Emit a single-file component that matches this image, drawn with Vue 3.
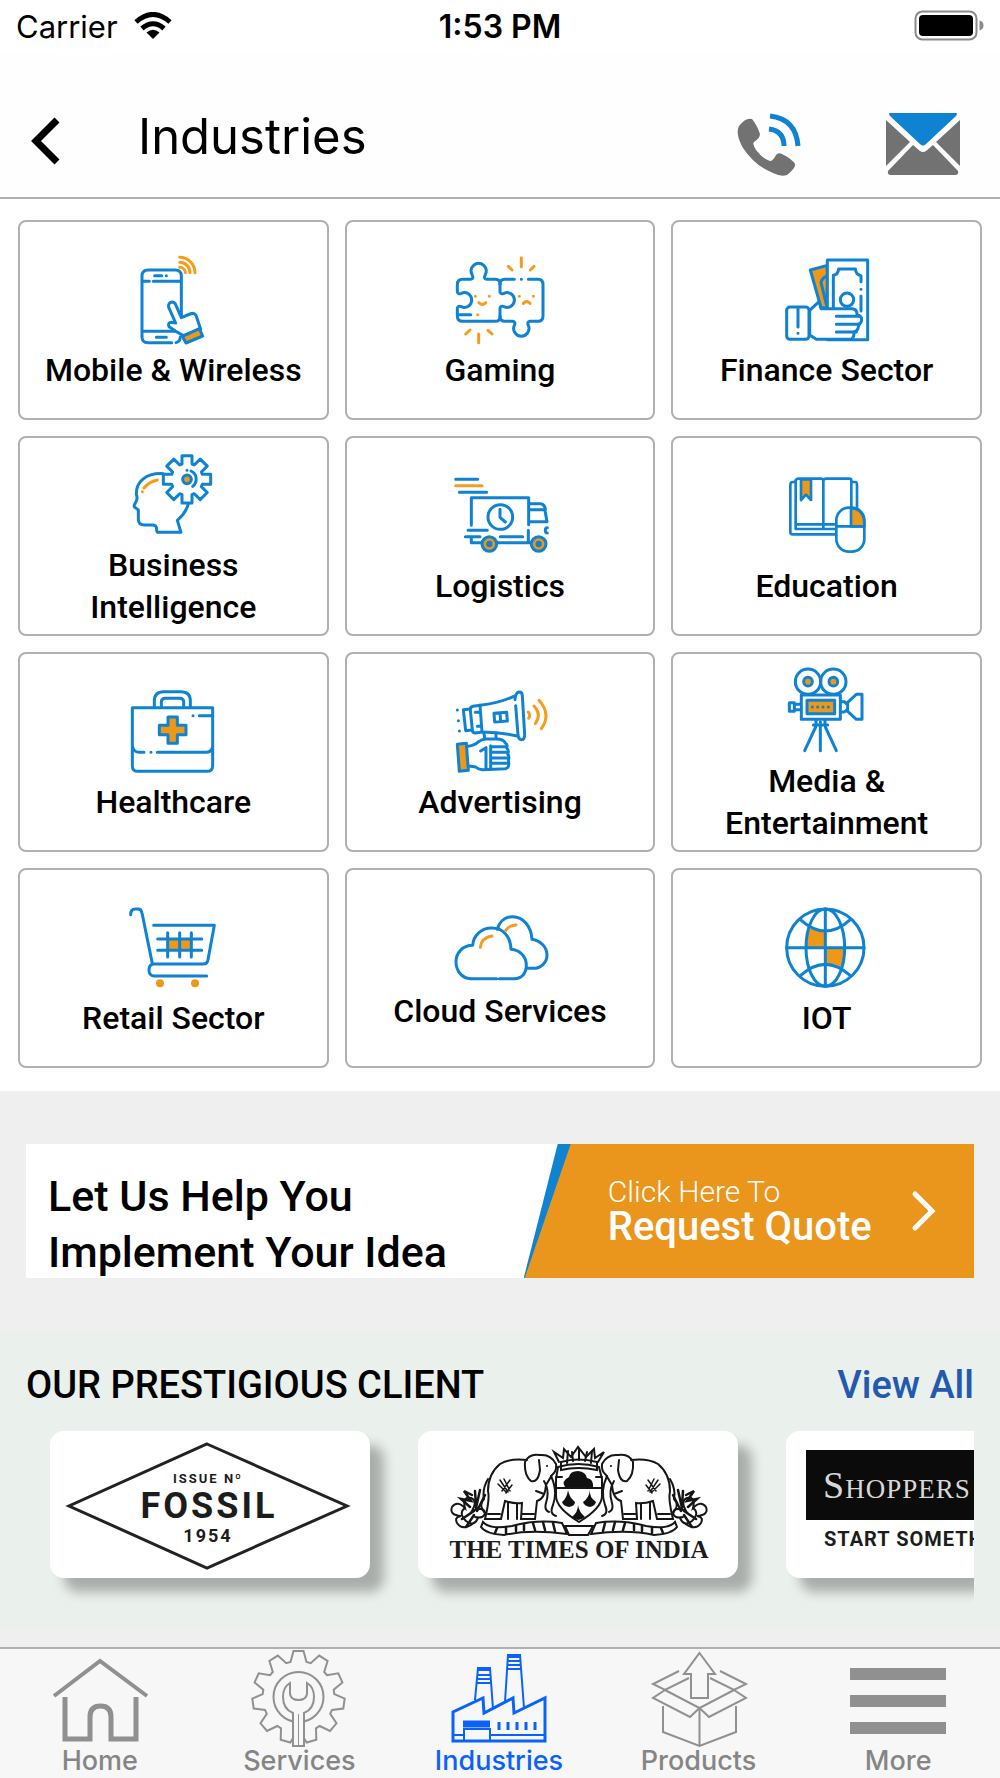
<script setup>
import { ref } from 'vue'

const tab = ref('industries')

// outline of a cog, each tooth tapers from base to tip
const cog = (cx, cy, teeth, base, tip, inner, outer) => {
  const pts = []
  for (let i = 0; i < teeth; i++) {
    const a = (i * 2 * Math.PI) / teeth
    const local = [
      [-base, -inner],
      [-tip, -outer],
      [tip, -outer],
      [base, -inner],
    ]
    local.forEach(([x, y]) => {
      const px = cx + x * Math.cos(a) - y * Math.sin(a)
      const py = cy + x * Math.sin(a) + y * Math.cos(a)
      pts.push(`${px.toFixed(1)} ${py.toFixed(1)}`)
    })
  }
  return `M${pts.join('L')}z`
}

const headCog = cog(563, 148, 8, 15, 15, 46, 71)
const serviceCog = cog(298.5, 1697, 11, 8, 5, 35, 46)
</script>

<template>
  <div class="page">
    <div class="status">
      <div class="carrier">
        <span>Carrier</span>
        <svg class="wifi" viewBox="0 0 38 28" aria-hidden="true">
          <path d="M2 10Q19-5 36 10" />
          <path d="M8 16.500Q19 7 30 16.500" />
          <path class="dot" d="M12.500 20.500Q19 15 25.500 20.500L19 27z" />
        </svg>
      </div>
      <strong>1:53 PM</strong>
      <div class="power">
        <svg viewBox="0 0 70 32" aria-hidden="true">
          <rect x="1.500" y="1.500" width="61" height="28" rx="7" fill="none" stroke="#8a8a8a" stroke-width="2" />
          <rect x="5" y="5" width="54" height="21" rx="4" />
          <path d="M65.500 10.500q4 1 4 5t-4 5z" fill="#8a8a8a" />
        </svg>
      </div>
    </div>

    <header class="header">
      <button class="back" type="button" aria-label="Back">
        <svg viewBox="0 0 32 48" aria-hidden="true">
          <path d="M27 3L6 24L27 45" />
        </svg>
      </button>
      <h1>Industries</h1>
      <a class="call" href="#call" aria-label="Call">
        <svg viewBox="0 0 68 68" aria-hidden="true">
          <path
            d="M4 16Q11 7 17 9Q22 15 25 24Q25 28 19 32Q17 34 21 40Q28 49 35 51Q38 51 41 45Q43 42 47 44Q57 49 60 54Q61 58 52 65Q46 67 38 63Q20 56 8 38Q0 24 4 16z"
            fill="#727272"
          />
          <path d="M34 19Q49 21 49 36M35 6Q61 9 63 36" fill="none" stroke="#0f82d2" stroke-width="5" />
        </svg>
      </a>
      <a class="mail" href="#mail" aria-label="Mail">
        <svg viewBox="0 0 76 64" aria-hidden="true">
          <path d="M5 1H71Q73 1 71 4L41 32Q38 35 35 32L5 4Q3 1 5 1z" fill="#0f82d2" />
          <path d="M1 8L25 30L1 54zM75 8L51 30L75 54zM28 33L35 39Q38 41 41 39L48 33L73 59Q74 63 70 63H6Q2 63 3 59z" fill="#727272" />
        </svg>
      </a>
    </header>

    <main>
      <nav class="grid" aria-label="Industries">
        <a class="card" href="#mobile">
          <svg viewBox="371 120 300 294" aria-hidden="true">
            <path d="M546 312V195q0-18-18-18H446q-18 0-18 18V377q0 18 18 18H517M530 395q12-3 13-17" />
            <path d="M430 211H450M462 211H542M430 361H528M466 194H487M501 194h.1M471 379H501" />
            <path class="white" d="M552 374L528 360L509 347q-5-12 7-13l13 2L508 289q-2-15 10-16q8 0 11 8l17 39l26-11q12-5 18 4l14 42z" />
            <path class="fill" d="M549 376L600 353L610 375L560 396z" />
            <path class="orange" d="M541 169a17 17 0 0 1 17 16M541 154a31 31 0 0 1 31 31M541 139a46 46 0 0 1 46 46" />
          </svg>
          <span>Mobile &amp; Wireless</span>
        </a>

        <a class="card" href="#gaming">
          <svg viewBox="360 120 300 294" aria-hidden="true">
            <path d="M510 219q0-14-14-14H470q-10-2-5-12a23 23 0 1 0-38 0q5 10-5 12H398q-16 0-16 16V243q2 8 12 4a22 22 0 1 1 0 40q-10-4-12 4V315q0 16 16 16H495q15 0 15-14" />
            <path d="M510 219V243q2 8 12 4a22 22 0 1 1 0 40q-10-4-12 4V315" />
            <path d="M553 205H525q-15 0-15 14M595 205H624q15 0 15 16V315q0 16-15 16H600q-10 2-5 12a23 23 0 1 1-42 0q5-10-5-12H525q-15 0-15-16" />
            <path d="M574 205h.1M386 311H422" />
            <path class="orange" d="M443 311h.1M574 140V167M535 166L546 177M612 166L601 177M446 369V395M420 357L407 369M474 358L486 369M436 256h.1M478 256h.1M447 275q10 11 20 0M568 256h.1M610 256h.1M580 277q10-10 20 0" />
          </svg>
          <span>Gaming</span>
        </a>

        <a class="card" href="#finance">
          <svg viewBox="352 120 300 294" aria-hidden="true">
            <path class="fill" d="M452 177L503 163V290H484z" />
            <path d="M500 196q-12 4-16 18L500 280" />
            <path class="white" d="M503 147H624V386H503z" />
            <path d="M521 290V193q14-2 16-19H587q2 17 17 20V212M604 235h.1M604 255V300" />
            <circle cx="562" cy="266" r="20" />
            <path class="white" d="M450 298L478 272L484 293H578q15 2 14 18q15 4 14 16q-1 11-10 13q3 18-13 23q1 16-8 22H470L450 372z" />
            <path d="M530 316H600M530 340H600M530 363H590" />
            <rect class="white" x="381" y="288" width="67" height="97" rx="10" />
            <path d="M415 290V348M415 367h.1" />
          </svg>
          <span>Finance Sector</span>
        </a>

        <a class="card" href="#business">
          <svg viewBox="371 48 300 294" aria-hidden="true">
            <path d="M492 131C440 128 410 155 411 193q6 14-4 28q-6 9 1 12l9 7V268q0 17 18 17h22q15-2 15 14q0 8 6 8h67l-11-36q26-22 33-50" />
            <path class="orange" d="M474 150q-26 6-40 24M429 185h.1" />
            <path class="white" :d="headCog" />
            <circle class="fill" cx="563" cy="148" r="13" />
            <path d="M575 123a27 27 0 0 1 5 46M563 121h.1" />
          </svg>
          <span>Business<br />Intelligence</span>
        </a>

        <a class="card" href="#logistics">
          <svg viewBox="1350 111 300 294" aria-hidden="true">
            <path d="M1367 148H1433M1378 187H1460M1414 286V203H1586V284" />
            <path class="orange" d="M1367 167H1446" />
            <circle cx="1501" cy="261" r="37" />
            <path d="M1500 238V262L1516 276M1404 301H1462M1396 320H1440M1414 322V338H1446M1492 338H1590M1501 320H1568M1585 301V338" />
            <path d="M1587 221H1622q13 2 14 18H1588M1635 242L1641 275H1588M1642 293q-6 0-6 8t6 8" />
            <circle class="fill" cx="1468" cy="342" r="22" />
            <circle class="fill" cx="1616" cy="342" r="22" />
            <circle class="blue" cx="1468" cy="342" r="5" />
            <circle class="blue" cx="1616" cy="342" r="5" />
          </svg>
          <span>Logistics</span>
        </a>

        <a class="card thin" href="#education">
          <svg viewBox="832 111 300 294" aria-hidden="true">
            <path d="M886 156h-6q-8 0-8 9V306q0 7 7 7H1008M888 152V297H1008M1060 156h6q6 0 6 8V232" />
            <path d="M888 152q2-6 8-6H964q6 0 7 6q2-6 8-6H1049q6 0 6 6V232M971 152V293M890 283H1008" />
            <path class="fill" d="M904 148H934V210L919 194L904 210z" />
            <rect class="white" x="1010" y="233" width="84" height="132" rx="38" />
            <path class="fill" d="M1054 234Q1093 238 1094 280V289H1054z" />
            <path d="M1011 289H1093" />
          </svg>
          <span>Education</span>
        </a>

        <a class="card" href="#healthcare">
          <svg viewBox="371 114 300 294" aria-hidden="true">
            <path d="M399 188H640V362q0 17-17 17H416q-17 0-17-17z" />
            <path d="M465 186V168q0-28 28-28H545q28 0 28 28V186M486 186V172q0-12 12-12H541q12 0 12 12V186" />
            <path d="M600 212H638M581 212h.1M400 306q4 16 20 16H434M455 322h.1M474 322H620q16 0 19-14" />
            <path class="fill" d="M506 216H534V241H560V269H534V295H506V269H480V241H506z" />
          </svg>
          <span>Healthcare</span>
        </a>

        <a class="card" href="#advertising">
          <svg viewBox="1350 114 300 294" aria-hidden="true">
            <path d="M1372 195h.1M1375 227h.1M1378 258h.1M1410 192L1390 194L1397 257L1416 255" />
            <path d="M1440 181L1419 184q-9 2-8 11l6 60q1 9 9 9l20-3zM1426 202h12M1432 244h12" />
            <path d="M1440 181Q1500 174 1546 152M1446 261Q1505 262 1555 274M1545 164q2-23 13-23q9 0 9 12l7 116q0 14-9 15q-9 0-11-14L1547 182" />
            <path d="M1482 205L1520 202L1522 228L1484 231zM1500 205L1502 229" />
            <path d="M1452 264L1454 280M1488 264V280" />
            <path d="M1402 304q20-1 34-14q10-8 24-8H1490q20 0 26 12q8 4 4 15q8 8 3 18q6 8 2 18q5 24-9 26L1447 374q-14-2-20-8L1402 362" />
            <path d="M1442 318L1458 308V370M1472 302V372M1472 305H1515M1474 322H1518M1476 339H1520M1476 355H1520" />
            <path class="fill" d="M1372 298L1399 295L1405 376L1378 379z" />
            <path class="orange" d="M1585 201q7 9 1 19M1602 183q24 26 4 53M1617 166q38 42 7 85" />
          </svg>
          <span>Advertising</span>
        </a>

        <a class="card" href="#media">
          <svg viewBox="832 51 300 294" aria-hidden="true">
            <circle cx="925" cy="110" r="38" />
            <circle cx="1001" cy="110" r="38" />
            <circle class="fill" cx="925" cy="110" r="13" />
            <circle class="fill" cx="1001" cy="110" r="13" />
            <rect class="white" x="905" y="150" width="117" height="73" />
            <rect class="fill" x="922" y="166" width="83" height="40" />
            <path d="M938 186h.1M954 186h.1M970 186h.1M986 186h.1M869 173V199H884V173zM884 178H902M884 194H902" />
            <path d="M1024 170H1034L1044 180V192L1034 201H1024M1044 172L1070 148H1087V223H1070L1044 199z" />
            <path d="M941 240H984M949 226V240M976 226V240M948 246L915 317M962 230V317M977 246L1010 317" />
          </svg>
          <span>Media &amp;<br />Entertainment</span>
        </a>

        <a class="card" href="#retail">
          <svg viewBox="371 118 300 294" aria-hidden="true">
            <path class="plain" d="M505 240H576V270H505z" />
            <path d="M394 165q0-17 14-17h8q10 0 12 12L459 312" />
            <path d="M463 197H645L626 300q-2 13-14 13H464q-15 1-15 18q0 17 15 18H622" />
            <path d="M475 238H607M475 272H607M505 219V292M541 219V292M576 219V292" />
            <circle class="plain" cx="482" cy="371" r="12" />
            <circle class="plain" cx="587" cy="371" r="12" />
          </svg>
          <span>Retail Sector</span>
        </a>

        <a class="card" href="#cloud">
          <svg class="low" viewBox="1350 138 300 252" aria-hidden="true">
            <path d="M1492 208C1500 180 1520 170 1538 170C1570 170 1594 200 1596 238C1622 242 1641 262 1641 285C1641 308 1622 325 1600 325H1583" />
            <path d="M1490 356H1412C1384 356 1368 330 1368 305C1368 280 1387 256 1418 256C1420 225 1445 204 1475 204C1510 204 1532 230 1533 268C1560 270 1579 290 1579 316C1579 340 1565 356 1543 356H1498" />
            <path class="orange" d="M1441 262Q1443 234 1476 228M1517 211Q1526 197 1548 195" />
          </svg>
          <span>Cloud Services</span>
        </a>

        <a class="card" href="#iot">
          <svg viewBox="2332 118 300 294" aria-hidden="true">
            <path class="plain" d="M2428 206Q2450 214 2477 214V264H2420Q2420 232 2428 206zM2477 264H2534Q2534 294 2526 322Q2504 312 2477 312z" />
            <circle cx="2477" cy="264" r="116" />
            <ellipse cx="2477" cy="264" rx="58" ry="116" />
            <path d="M2361 264H2593M2477 148V380M2402 180Q2477 248 2552 180M2402 348Q2477 280 2552 348" />
          </svg>
          <span>IOT</span>
        </a>
      </nav>

      <section class="promo">
        <div class="banner">
          <p>Let Us Help You<br />Implement Your Idea</p>
          <a class="quote" href="#quote">
            <span class="quote-inner">
              <span class="quote-text">
                <small>Click Here To</small>
                <b>Request Quote</b>
              </span>
              <svg viewBox="0 0 26 42" aria-hidden="true">
                <path d="M4 4L21 21L4 38" />
              </svg>
            </span>
          </a>
        </div>
      </section>

      <section class="clients">
        <div class="clients-head">
          <h2>OUR PRESTIGIOUS CLIENT</h2>
          <a href="#clients">View All</a>
        </div>
        <div class="strip">
          <div class="logo">
            <svg viewBox="0 0 320 147" role="img" aria-label="Fossil">
              <path d="M157 13L297 75L157 137L19 75z" fill="none" stroke="#222" stroke-width="3" />
              <text class="fossil-sm" x="158" y="52">ISSUE Nº</text>
              <text class="fossil" x="159" y="87">FOSSIL</text>
              <text class="fossil-year" x="158" y="111">1954</text>
            </svg>
          </div>
          <div class="logo">
            <svg viewBox="0 0 320 147" role="img" aria-label="The Times of India">
              <defs>
                <g id="supporter" class="ink">
                  <path class="white" d="M109 29Q92 27 82 33Q70 43 70 60Q72 68 67 88H83L87 70Q96 73 104 72L103 88H117L119 70Q127 68 128 54L134 44Q139 40 138 33Q133 23 122 24Q111 22 107 31Q106 44 113 50Q120 52 122 39L121 29" />
                  <path d="M126 50Q132 60 128 72Q126 79 131 81M133 45Q140 60 135 74Q131 83 138 85M70 48Q64 58 66 68Q60 74 67 82" />
                  <path d="M82 49l8 12M86 48l6 12M80 53l8 8M84 60l8-11M88 62l6-8" stroke-width="1.500" />
                  <path d="M118 60l8 3M129 35h.1M70 83h12M104 83h12M90 72V88M99 73V88" />
                  <path class="white" d="M65 91Q72 99 94 95Q120 88 144 92L149 103Q112 98 86 104Q68 103 63 96z" />
                  <path d="M79 97l-2 5M88 96v6M98 95v5M106 93v6M115 92l2 7M125 91l2 8M135 92l2 8" stroke-width="2.500" />
                  <path d="M57 91Q45 101 39 92Q36 86 43 85Q31 84 34 76Q39 69 47 77Q44 65 53 67Q60 70 54 80Q66 75 67 82Q66 88 57 86M47 77Q40 82 48 90Q56 96 60 87" />
                  <path d="M54 64L46 60L53 70L43 68L52 76M57 60L58 75M62 59L58 77M67 64L59 80M44 88l12-8M48 96l8-12" stroke-width="2.500" />
                </g>
              </defs>
              <path class="ink white" d="M140 36Q160 30 181 36L184 48V65Q184 77 161 91Q138 77 138 65V48z" />
              <path class="ink" d="M143 31Q160 26 179 31V39Q160 35 143 39z M141 31L136 21L145 27L146 18L153 26L160 16L168 26L176 18L177 27L186 21L180 31" />
              <path class="ink" d="M149 32l1-12M155 30l-1-9M161 29V18M167 30l2-9M173 32l1-12" />
              <path d="M147 56Q143 50 151 46Q152 40 160 40Q168 41 169 47Q176 48 175 57z" fill="#111" />
              <path class="ink" d="M138 57H184M138 46H144M178 46H184" />
              <path d="M150 59Q151 66 157 71Q157 75 151 76Q145 75 144 71Q149 67 150 59zM172 59Q171 66 178 71Q177 75 172 76Q166 75 165 71Q171 67 172 59zM160 74Q161 81 167 86Q160 92 154 86Q160 81 160 74z" fill="#111" />
              <path class="ink white" d="M147 95H175L170 104H151z" />
              <use href="#supporter" />
              <use href="#supporter" transform="translate(322 0) scale(-1 1)" />
              <text class="times" x="161" y="127">THE TIMES OF INDIA</text>
            </svg>
          </div>
          <div class="logo">
            <svg viewBox="0 0 320 147" role="img" aria-label="Shoppers Stop">
              <path d="M20 19H300V89H20z" fill="#0c0b0c" />
              <text class="shop" x="37" y="67">Shoppers</text>
              <text class="shop-sm" x="38" y="115">START SOMETHING</text>
            </svg>
          </div>
        </div>
      </section>
    </main>

    <nav class="tabs" aria-label="Main">
      <a href="#home" :class="{ active: tab === 'home' }" @click="tab = 'home'">
        <svg viewBox="49 1651 100 96" aria-hidden="true">
          <path d="M53 1696L99 1661L146 1696" stroke-width="4" />
          <path d="M64 1697V1739H89V1717Q89 1706 99.500 1706T110 1717V1739H135V1697" stroke-width="5" />
        </svg>
        <span>Home</span>
      </a>
      <a href="#services" :class="{ active: tab === 'services' }" @click="tab = 'services'">
        <svg viewBox="249 1651 100 96" aria-hidden="true">
          <path :d="serviceCog" />
          <circle cx="298.500" cy="1697" r="25" />
          <path class="bar" d="M293 1746V1713Q283 1709 283 1697Q283 1687 290 1683V1694Q291 1700 298.500 1700T307 1694V1683Q314 1687 314 1697Q314 1709 304 1713V1746z" />
          <path d="M298.500 1714V1745" stroke-width="1" />
        </svg>
        <span>Services</span>
      </a>
      <a href="#industries" :class="{ active: tab === 'industries' }" @click="tab = 'industries'">
        <svg viewBox="449 1651 100 96" aria-hidden="true">
          <path d="M475 1700L478 1668H490L493 1709M505 1702L508 1655H520L524 1708M478 1670H490M477 1675H491M477 1679H491M476 1683H492M508 1657H520M507 1661H521M507 1665H521M507 1669H521" />
          <path d="M453 1741V1712L483 1698L484 1713L513 1698L514 1713L545 1698V1741z" stroke-width="3" />
          <path d="M453 1735H463M491 1735H545M464 1741V1729H490V1741" />
          <path d="M463 1724H490" stroke-width="7" />
          <path d="M499 1722V1730M508 1722V1730M517 1722V1730M526 1722V1730M535 1722V1730" stroke-width="3" />
        </svg>
        <span>Industries</span>
      </a>
      <a href="#products" :class="{ active: tab === 'products' }" @click="tab = 'products'">
        <svg viewBox="649 1651 100 96" aria-hidden="true">
          <path d="M663 1706V1732L699.500 1746L736 1732V1706M699.500 1708V1745" />
          <path d="M679 1671L653 1684L665 1690L689 1678M720 1671L746 1684L734 1690L710 1678" />
          <path d="M665 1690L653 1698L690 1717L699.500 1708zM734 1690L746 1698L709 1717L699.500 1708z" />
          <path class="bar" d="M699.500 1653L715 1674H708V1698H691V1674H684z" />
        </svg>
        <span>Products</span>
      </a>
      <a href="#more" :class="{ active: tab === 'more' }" @click="tab = 'more'">
        <svg viewBox="849 1651 100 96" aria-hidden="true">
          <path d="M851 1674H947M851 1701H947M851 1728H947" stroke-width="12" />
        </svg>
        <span>More</span>
      </a>
    </nav>
  </div>
</template>

<style>
body {
  margin: 0;
  background: #efefef;
}
</style>

<style scoped>
.page {
  display: flex;
  flex-direction: column;
  min-height: 100vh;
  background: #efefef;
  color: #000;
  font-family: Roboto, sans-serif;
}

a {
  color: inherit;
  text-decoration: none;
}

h1,
h2,
p {
  margin: 0;
}

svg {
  display: block;
  flex: none;
}

/* status bar */
.status {
  display: grid;
  grid-template-columns: 1fr auto 1fr;
  align-items: center;
  height: 52px;
  padding: 0 16px;
  background: #fff;
  font-family: Inter, sans-serif;
  font-size: 31px;
}

.status strong {
  font-size: 32px;
  font-weight: 600;
}

.carrier {
  display: flex;
  align-items: center;
  gap: 16px;
}

.wifi {
  width: 38px;
  height: 28px;
}

.wifi path {
  fill: none;
  stroke: #000;
  stroke-width: 5;
}

.wifi .dot {
  fill: #000;
  stroke: none;
}

.power {
  display: flex;
  justify-content: flex-end;
}

.power svg {
  width: 70px;
  height: 32px;
}

/* header */
.header {
  display: flex;
  align-items: center;
  height: 113px;
  padding: 32px 39px 0 30px;
  border-bottom: 2px solid #b0b0b0;
  background: #fefefe;
}

.back {
  padding: 0;
  border: 0;
  background: none;
  cursor: pointer;
}

.back svg {
  width: 32px;
  height: 48px;
}

.back path {
  fill: none;
  stroke: #000;
  stroke-width: 7;
}

h1 {
  flex: 1;
  padding: 0 0 8px 76px;
  font-family: Inter, sans-serif;
  font-size: 49px;
  font-weight: 400;
  line-height: 60px;
}

.call,
.mail {
  padding-top: 6px;
}

.call svg {
  width: 68px;
  height: 68px;
}

.mail {
  margin-left: 82px;
}

.mail svg {
  width: 76px;
  height: 64px;
}

/* industry cards */
.grid {
  display: grid;
  grid-template-columns: repeat(3, 1fr);
  gap: 16px;
  padding: 21px 18px 23px;
  background: #fff;
}

.card {
  display: flex;
  flex-direction: column;
  align-items: center;
  justify-content: center;
  box-sizing: border-box;
  min-height: 200px;
  padding-top: 2px;
  border: 2px solid #b0b0b0;
  border-radius: 8px;
  font-size: 32px;
  font-weight: 500;
  line-height: 42px;
  text-align: center;
}

.card svg {
  width: 100px;
  height: 98px;
  fill: none;
  stroke: #0f82d2;
  stroke-width: 9;
  stroke-linecap: round;
  stroke-linejoin: round;
}

.card .low {
  height: 84px;
}

.thin svg {
  stroke-width: 8;
}

.card .white {
  fill: #fff;
}

.card .fill {
  fill: #ee9818;
}

.card .blue {
  fill: #0f82d2;
}

.card .orange {
  stroke: #f59c1c;
}

.card .plain {
  fill: #ee9818;
  stroke: none;
}

/* quote banner */
.promo {
  padding: 53px 26px;
}

.banner {
  display: flex;
  justify-content: space-between;
  height: 134px;
  background: #fff;
}

.banner p {
  padding: 24px 0 0 22px;
  font-size: 43px;
  font-weight: 500;
  line-height: 56px;
}

.quote {
  display: flex;
  width: 47.5%;
  background: #0f82d2;
  clip-path: polygon(34px 0, 100% 0, 100% 100%, 0 100%);
}

.quote-inner {
  display: flex;
  flex: 1;
  align-items: center;
  justify-content: space-between;
  padding: 0 37px 0 84px;
  background: #ea951b;
  clip-path: polygon(47px 0, 100% 0, 100% 100%, 1px 100%);
  color: #fff;
}

.quote-text {
  display: flex;
  flex-direction: column;
}

.quote small {
  font-size: 30px;
  font-weight: 300;
  line-height: 32px;
}

.quote b {
  font-size: 40px;
  font-weight: 500;
  line-height: 38px;
}

.quote svg {
  width: 26px;
  height: 42px;
  fill: none;
  stroke: #fff;
  stroke-width: 5;
  stroke-linecap: round;
}

/* clients */
.clients {
  margin-bottom: 17px;
  padding: 28px 26px 21px;
  background: #eaf0ec;
}

.clients-head {
  display: flex;
  justify-content: space-between;
  font-size: 38px;
  line-height: 52px;
}

.clients-head h2 {
  font-size: 38px;
  font-weight: 500;
}

.clients-head a {
  color: #2459b0;
  font-weight: 500;
}

.strip {
  display: flex;
  gap: 48px;
  padding: 20px 0 30px 24px;
  overflow-x: auto;
  scrollbar-width: none;
}

.logo {
  flex: none;
  border-radius: 14px;
  background: #fff;
  box-shadow: 14px 14px 12px rgba(0, 0, 0, 0.28);
}

.logo svg {
  width: 320px;
  height: 147px;
}

.logo text {
  fill: #1c1c1c;
  font-family: Roboto, sans-serif;
  font-weight: 700;
  text-anchor: middle;
}

.logo .fossil {
  font-size: 36px;
  letter-spacing: 3px;
}

.logo .fossil-sm {
  font-size: 13px;
  letter-spacing: 2px;
}

.logo .fossil-year {
  font-size: 18px;
  letter-spacing: 2px;
}

.logo .times {
  font-family: 'Liberation Serif', serif;
  font-size: 25px;
}

.logo .shop {
  fill: #d8d8d8;
  font-family: 'Liberation Serif', serif;
  font-size: 38px;
  font-variant: small-caps;
  font-weight: 400;
  letter-spacing: 1px;
  text-anchor: start;
}

.logo .shop-sm {
  font-size: 20px;
  letter-spacing: 1px;
  text-anchor: start;
}

.ink {
  fill: none;
  stroke: #161616;
  stroke-width: 2;
  stroke-linecap: round;
}

.logo .white {
  fill: #fff;
}

/* tab bar */
.tabs {
  display: flex;
  margin-top: auto;
  padding: 2px 2px 3px 0;
  border-top: 2px solid #b0b0b0;
  background: #f7f7f7;
}

.tabs a {
  display: flex;
  flex: 1;
  flex-direction: column;
  align-items: center;
  color: #858585;
  font-family: Inter, sans-serif;
  font-size: 27px;
  font-weight: 500;
  line-height: 28px;
}

.tabs svg {
  width: 100px;
  height: 96px;
  overflow: visible;
  fill: none;
  stroke: #909090;
  stroke-width: 2;
}

.tabs .bar {
  fill: #f7f7f7;
}

.tabs .active {
  color: #0b62fa;
}

.tabs .active svg {
  stroke: #0b62fa;
}
</style>
